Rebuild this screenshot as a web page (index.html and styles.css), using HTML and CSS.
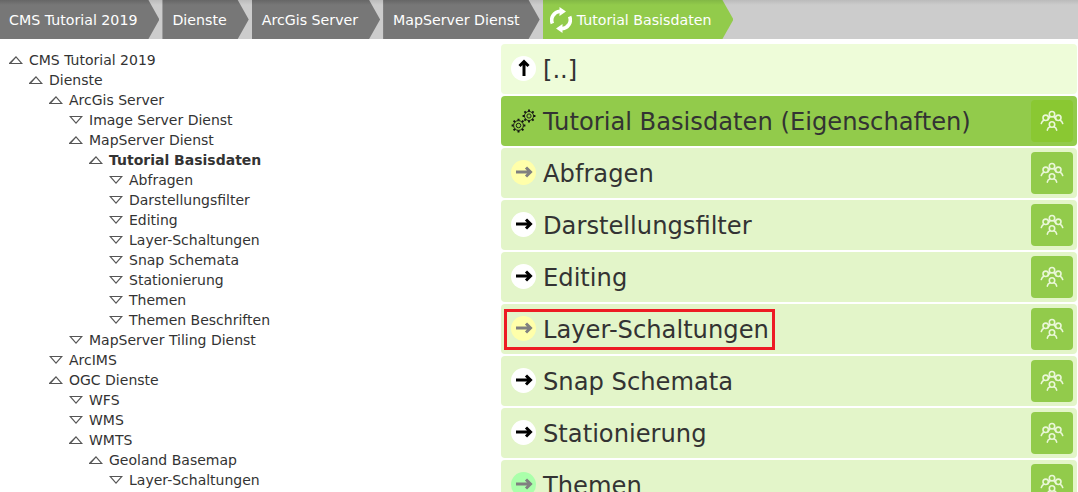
FILE: index.html
```html
<!DOCTYPE html>
<html lang="en">

<head>
    <meta charset="utf-8">
    <title>CMS Tutorial 2019</title>
    <link rel="stylesheet" href="styles.css">
</head>

<body>
    <svg class="defs" width="0" height="0">
        <symbol id="people" viewBox="0 0 24 24">
            <g fill="none" stroke="currentColor" stroke-width="1.600" stroke-linecap="round">
                <circle cx="12" cy="5.200" r="2.700" />
                <circle cx="5.700" cy="8.800" r="2.700" />
                <circle cx="18.300" cy="8.800" r="2.700" />
                <circle cx="12" cy="15.500" r="2.700" />
                <path d="M1.300 14.500c.5-1.500 1.200-2.500 2.500-3.200M22.700 14.500c-.5-1.500-1.200-2.500-2.500-3.200" />
                <path d="M8.200 10.500c.3-1 .8-1.800 1.700-2.500M15.800 10.500c-.3-1-.8-1.800-1.700-2.500" />
                <path d="M7.300 21.200c.3-2 1.300-3 2.700-3.400M16.700 21.200c-.3-2-1.300-3-2.700-3.400" />
            </g>
        </symbol>
        <symbol id="arrow" viewBox="0 0 24 24">
            <path d="M4 12h14M14 7.500L18.500 12 14 16.500" fill="none" stroke="currentColor" stroke-width="3" />
        </symbol>
        <symbol id="gear" viewBox="0 0 24 24">
            <g fill="none" stroke="currentColor" stroke-width="1.500">
                <circle cx="12" cy="12" r="3.600" />
                <circle cx="12" cy="12" r="7.800" />
                <path stroke-width="3.200" d="M12 1v3M12 20v3M1 12h3M20 12h3M4.200 4.200l2.200 2.200M17.600 17.600l2.200 2.200M4.200 19.800l2.200-2.200M17.600 6.400l2.200-2.200" />
            </g>
        </symbol>
    </svg>

    <nav class="crumbs">
        <a class="crumb">CMS Tutorial 2019</a>
        <a class="crumb">Dienste</a>
        <a class="crumb">ArcGis Server</a>
        <a class="crumb">MapServer Dienst</a>
        <a class="crumb current">
            <svg class="spin" viewBox="0 0 22 26">
                <g fill="none" stroke="#fff" stroke-width="3.600">
                    <path d="M2.400 16.500A8.800 8.800 0 0 1 10 4.300" />
                    <path d="M19.600 9.500A8.800 8.800 0 0 1 12 21.700" />
                </g>
                <path fill="#fff" d="M9.500 0L16 4.500 9.500 9zM12.500 17L6 21.500l6.500 4.500z" />
            </svg>
            Tutorial Basisdaten
        </a>
    </nav>

    <div class="main">
        <ul class="tree">
            <li><span class="open">CMS Tutorial 2019</span>
                <ul>
                    <li><span class="open">Dienste</span>
                        <ul>
                            <li><span class="open">ArcGis Server</span>
                                <ul>
                                    <li><span class="closed">Image Server Dienst</span></li>
                                    <li><span class="open">MapServer Dienst</span>
                                        <ul>
                                            <li><span class="open active">Tutorial Basisdaten</span>
                                                <ul>
                                                    <li><span class="closed">Abfragen</span></li>
                                                    <li><span class="closed">Darstellungsfilter</span></li>
                                                    <li><span class="closed">Editing</span></li>
                                                    <li><span class="closed">Layer-Schaltungen</span></li>
                                                    <li><span class="closed">Snap Schemata</span></li>
                                                    <li><span class="closed">Stationierung</span></li>
                                                    <li><span class="closed">Themen</span></li>
                                                    <li><span class="closed">Themen Beschriften</span></li>
                                                </ul>
                                            </li>
                                        </ul>
                                    </li>
                                    <li><span class="closed">MapServer Tiling Dienst</span></li>
                                </ul>
                            </li>
                            <li><span class="closed">ArcIMS</span></li>
                            <li><span class="open">OGC Dienste</span>
                                <ul>
                                    <li><span class="closed">WFS</span></li>
                                    <li><span class="closed">WMS</span></li>
                                    <li><span class="open">WMTS</span>
                                        <ul>
                                            <li><span class="open">Geoland Basemap</span>
                                                <ul>
                                                    <li><span class="closed">Layer-Schaltungen</span></li>
                                                </ul>
                                            </li>
                                        </ul>
                                    </li>
                                </ul>
                            </li>
                        </ul>
                    </li>
                </ul>
            </li>
        </ul>

        <div class="tiles">
            <div class="tile up">
                <span class="bullet white"><svg class="rot" viewBox="0 0 24 24"><use href="#arrow" /></svg></span>
                <span class="label">[..]</span>
            </div>
            <div class="tile self">
                <span class="gears">
                    <svg class="gear-big" viewBox="0 0 24 24"><use href="#gear" /></svg>
                    <svg class="gear-small" viewBox="0 0 24 24"><use href="#gear" /></svg>
                </span>
                <span class="label">Tutorial Basisdaten (Eigenschaften)</span>
                <span class="sec dark"><svg viewBox="0 0 24 24"><use href="#people" /></svg></span>
            </div>
            <div class="tile">
                <span class="bullet yellow"><svg viewBox="0 0 24 24"><use href="#arrow" /></svg></span>
                <span class="label">Abfragen</span>
                <span class="sec"><svg viewBox="0 0 24 24"><use href="#people" /></svg></span>
            </div>
            <div class="tile">
                <span class="bullet white"><svg viewBox="0 0 24 24"><use href="#arrow" /></svg></span>
                <span class="label">Darstellungsfilter</span>
                <span class="sec"><svg viewBox="0 0 24 24"><use href="#people" /></svg></span>
            </div>
            <div class="tile">
                <span class="bullet white"><svg viewBox="0 0 24 24"><use href="#arrow" /></svg></span>
                <span class="label">Editing</span>
                <span class="sec"><svg viewBox="0 0 24 24"><use href="#people" /></svg></span>
            </div>
            <div class="tile">
                <span class="marked">
                    <span class="bullet yellow"><svg viewBox="0 0 24 24"><use href="#arrow" /></svg></span>
                    <span class="label">Layer-Schaltungen</span>
                </span>
                <span class="sec"><svg viewBox="0 0 24 24"><use href="#people" /></svg></span>
            </div>
            <div class="tile">
                <span class="bullet white"><svg viewBox="0 0 24 24"><use href="#arrow" /></svg></span>
                <span class="label">Snap Schemata</span>
                <span class="sec"><svg viewBox="0 0 24 24"><use href="#people" /></svg></span>
            </div>
            <div class="tile">
                <span class="bullet white"><svg viewBox="0 0 24 24"><use href="#arrow" /></svg></span>
                <span class="label">Stationierung</span>
                <span class="sec"><svg viewBox="0 0 24 24"><use href="#people" /></svg></span>
            </div>
            <div class="tile">
                <span class="bullet green"><svg viewBox="0 0 24 24"><use href="#arrow" /></svg></span>
                <span class="label">Themen</span>
                <span class="sec"><svg viewBox="0 0 24 24"><use href="#people" /></svg></span>
            </div>
        </div>
    </div>
</body>

</html>
```
FILE: styles.css
```css
html,
body {
    height: 100%;
}

body {
    margin: 0;
    overflow: hidden;
    background-color: #fff;
    color: #333;
    font-family: Verdana, "DejaVu Sans", sans-serif;
}

.defs {
    position: absolute;
}

/* breadcrumb */
.crumbs {
    display: flex;
    gap: 3px;
    height: 39px;
    background: linear-gradient(#bbb, #ccc 5px);
}

.crumb {
    display: flex;
    align-items: center;
    gap: 5px;
    padding: 0 22px 0 10px;
    font-size: 14.200px;
    color: #fff;
    background: linear-gradient(#666, #777 5px);
    clip-path: polygon(0 0, calc(100% - 11px) 0, 100% 50%, calc(100% - 11px) 100%, 0 100%);
}

.crumb:first-child {
    padding-left: 9px;
}

.crumb:nth-child(4) {
    padding-right: 20px;
}

.crumb.current {
    padding-left: 7px;
    background: linear-gradient(#82b845, #92cb4b 5px);
}

.spin {
    width: 22px;
    height: 26px;
}

/* tree */
.main {
    display: flex;
    height: calc(100% - 39px);
}

.tree,
.tree ul {
    margin: 0;
    padding: 0;
    list-style: none;
}

.tree {
    width: 501px;
    flex: none;
    box-sizing: border-box;
    padding: 11px 0 0 9px;
    font-size: 14px;
    line-height: 20px;
}

.tree ul {
    padding-left: 20px;
}

.tree span {
    display: flex;
    align-items: center;
    gap: 6px;
    white-space: nowrap;
}

.tree span::before {
    content: "";
    width: 14px;
    height: 8px;
    flex: none;
    background-color: #555;
}

.open::before {
    clip-path: polygon(50% 0, 100% 100%, 0 100%, 0 86%, 82.600% 86%, 50% 21%, 17.400% 86%, 0 86%);
}

.closed::before {
    clip-path: polygon(0 0, 100% 0, 50% 100%, 0 0, 17.400% 14%, 50% 79%, 82.600% 14%, 17.400% 14%);
}

.tree .active {
    font-weight: bold;
}

/* tiles */
.tiles {
    flex: 1;
    display: flex;
    flex-direction: column;
    gap: 2px;
    padding-top: 5px;
    min-width: 0;
}

.tile {
    flex: none;
    display: flex;
    align-items: center;
    height: 50px;
    margin-right: 1px;
    padding-left: 10px;
    border-radius: 4px;
    background-color: #e3f5c9;
    font-size: 24.200px;
}

.tile.up {
    background-color: #eefcd9;
}

.tile.self {
    background-color: #92cb4b;
}

.label {
    margin-left: 7px;
    padding-top: 2px;
    white-space: nowrap;
}

.marked {
    display: flex;
    align-items: center;
    height: 41px;
    margin-left: -7px;
    padding: 0 3px 0 4px;
    border: 3px solid #ed1c24;
    box-sizing: border-box;
}

.bullet {
    display: flex;
    align-items: center;
    justify-content: center;
    width: 25px;
    height: 25px;
    margin-bottom: 2px;
    flex: none;
    border-radius: 50%;
    color: #000;
}

.bullet svg {
    width: 24px;
    height: 24px;
    flex: none;
}

.bullet .rot {
    transform: rotate(-90deg);
}

.bullet.white {
    background-color: #fff;
}

.bullet.yellow {
    background-color: #ffffaa;
    color: #808080;
}

.bullet.green {
    background-color: #aaffaa;
    color: #808080;
}

.gears {
    position: relative;
    width: 25px;
    height: 25px;
    flex: none;
    color: #111;
}

.gears svg {
    position: absolute;
}

.gear-big {
    left: 0;
    top: 9px;
    width: 15px;
    height: 15px;
}

.gear-small {
    left: 11px;
    top: 0;
    width: 14px;
    height: 14px;
}

.sec {
    display: flex;
    align-items: center;
    justify-content: center;
    width: 42px;
    height: 42px;
    margin-left: auto;
    margin-right: 4px;
    border-radius: 4px;
    background-color: #92cb4b;
    color: #eaf7d8;
}

.sec.dark {
    background-color: #8ac832;
}

.sec svg {
    width: 24px;
    height: 24px;
}
```
